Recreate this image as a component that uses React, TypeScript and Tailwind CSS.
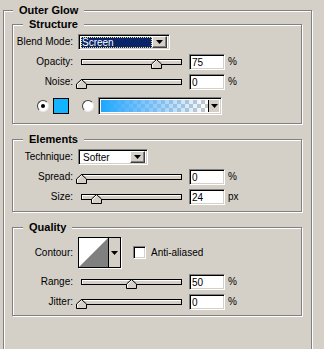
import React from "react";

const etched = "border border-[#808080] shadow-[inset_1px_1px_0_#fff,1px_1px_0_#fff]";
const sunken = "border border-t-[#808080] border-l-[#808080] border-b-white border-r-white shadow-[inset_1px_1px_0_#000,inset_-1px_-1px_0_#d4d0c8]";
const raised = "border border-t-white border-l-white border-b-[#404040] border-r-[#404040] shadow-[inset_-1px_-1px_0_#808080]";

function Arrow() {
  return (
    <svg width="7" height="4" viewBox="0 0 7 4">
      <polygon points="0,0 7,0 3.5,4" fill="#000" />
    </svg>
  );
}

function Title({ text, ml }: { text: string; ml: string }) {
  return (
    <div className={`-mt-[7px] h-[13px] leading-[13px] w-fit px-[6px] bg-[#d4d0c8] text-[11px] font-bold ${ml}`}>{text}</div>
  );
}

function Thumb({ pct }: { pct: number }) {
  const left = Math.round(pct * 101 - 5.5) - 1;
  return (
    <svg className="absolute top-[-1px]" style={{ left }} width="11" height="10" viewBox="0 0 11 10">
      <polygon points="5.5,0.5 10.5,5 10.5,9.5 0.5,9.5 0.5,5" fill="#d4d0c8" stroke="#000" strokeWidth="1" />
      <polyline points="1.5,8.5 1.5,5.4 5.5,1.8" fill="none" stroke="#fff" strokeWidth="1" />
    </svg>
  );
}

function SliderRow({ label, value, pct, unit, mt }: { label: string; value: string; pct: number; unit: string; mt: string }) {
  return (
    <div className={`flex items-center h-[16px] ${mt}`}>
      <div className="w-[60px] text-right leading-none">{label}</div>
      <div className="relative ml-[8px] w-[101px] h-[6px] border border-black bg-[#d4d0c8] shadow-[inset_1px_1px_0_#fff]">
        <Thumb pct={pct} />
      </div>
      <div className={`ml-[7px] w-[36px] h-[16px] bg-white ${sunken} pl-[2px] pt-[2px] leading-[12px]`}>{value}</div>
      <div className="ml-[3px] leading-none">{unit}</div>
    </div>
  );
}

function Radio({ checked }: { checked?: boolean }) {
  return (
    <div className="w-[12px] h-[12px] rounded-full bg-white border border-t-[#404040] border-l-[#404040] border-b-[#e8e8e8] border-r-[#e8e8e8] flex items-center justify-center">
      {checked ? <div className="w-[4px] h-[4px] rounded-full bg-black" /> : null}
    </div>
  );
}

export default function App() {
  return (
    <div className="w-[324px] h-[349px] overflow-hidden bg-[#d4d0c8] font-['Liberation_Sans',Arial,sans-serif] text-[10px] text-black">
      <div className="pt-[10px] pl-[3px]">
        <div className={`w-[309px] h-[360px] ${etched}`}>
          <Title text="Outer Glow" ml="ml-[9px]" />

          {/* Structure */}
          <div className={`mt-[7px] ml-[8px] w-[290px] h-[100px] ${etched}`}>
            <Title text="Structure" ml="ml-[10px]" />
            <div className="flex items-center h-[16px] mt-[3px]">
              <div className="w-[60px] text-right leading-none">Blend Mode:</div>
              <div className={`ml-[5px] w-[92px] h-[16px] bg-white ${sunken} flex items-center p-[2px]`}>
                <div className="flex-1 h-[11px] bg-[#0a246a] outline outline-1 outline-dotted outline-[#e8e070] -outline-offset-1 text-white leading-[11px] pl-[1px]">Screen</div>
                <div className={`w-[15px] h-[12px] bg-[#d4d0c8] ${raised} flex items-center justify-center`}>
                  <Arrow />
                </div>
              </div>
            </div>
            <SliderRow label="Opacity:" value="75" pct={0.75} unit="%" mt="mt-[4px]" />
            <SliderRow label="Noise:" value="0" pct={0} unit="%" mt="mt-[4px]" />
            <div className="flex items-center h-[18px] mt-[7px]">
              <div className="ml-[24px]"><Radio checked /></div>
              <div className="ml-[4px] w-[16px] h-[16px] border border-black bg-[#12b4ff]" />
              <div className="ml-[13px]"><Radio /></div>
              <div className={`ml-[4px] w-[124px] h-[18px] ${sunken} flex p-[2px] bg-white`}>
                <div className="flex-1 h-full bg-[repeating-conic-gradient(#c8c8c8_0%_25%,#ffffff_0%_50%)] bg-size-[8px_8px]">
                  <div className="w-full h-full bg-linear-to-r from-[#18a8ff] via-[#60b8ff]/70 to-transparent" />
                </div>
                <div className="w-[11px] h-full border-l border-black bg-[#d4d0c8] flex items-center justify-center">
                  <Arrow />
                </div>
              </div>
            </div>
          </div>

          {/* Elements */}
          <div className={`mt-[15px] ml-[8px] w-[290px] h-[73px] ${etched}`}>
            <Title text="Elements" ml="ml-[10px]" />
            <div className="flex items-center h-[16px] mt-[3px]">
              <div className="w-[60px] text-right leading-none">Technique:</div>
              <div className={`ml-[5px] w-[70px] h-[16px] bg-white ${sunken} flex items-center p-[2px]`}>
                <div className="flex-1 leading-[11px] pl-[2px]">Softer</div>
                <div className={`w-[15px] h-[12px] bg-[#d4d0c8] ${raised} flex items-center justify-center`}>
                  <Arrow />
                </div>
              </div>
            </div>
            <SliderRow label="Spread:" value="0" pct={0} unit="%" mt="mt-[4px]" />
            <SliderRow label="Size:" value="24" pct={0.15} unit="px" mt="mt-[4px]" />
          </div>

          {/* Quality */}
          <div className={`mt-[15px] ml-[8px] w-[290px] h-[89px] ${etched}`}>
            <Title text="Quality" ml="ml-[10px]" />
            <div className="flex items-center h-[31px] mt-[3px]">
              <div className="w-[60px] text-right leading-none">Contour:</div>
              <div className="ml-[5px] w-[43px] h-[31px] border border-black flex bg-[#d4d0c8] shadow-[1px_1px_0_#fff]">
                <svg width="29" height="29" viewBox="0 0 29 29" className="bg-white">
                  <polygon points="0,29 29,0 29,29" fill="#808080" />
                </svg>
                <div className="flex-1 border-l border-black flex items-center justify-center">
                  <Arrow />
                </div>
              </div>
              <div className={`ml-[12px] w-[13px] h-[13px] bg-white ${sunken}`} />
              <div className="ml-[5px] leading-none">Anti-aliased</div>
            </div>
            <SliderRow label="Range:" value="50" pct={0.5} unit="%" mt="mt-[6px]" />
            <SliderRow label="Jitter:" value="0" pct={0} unit="%" mt="mt-[4px]" />
          </div>
        </div>
      </div>
    </div>
  );
}
